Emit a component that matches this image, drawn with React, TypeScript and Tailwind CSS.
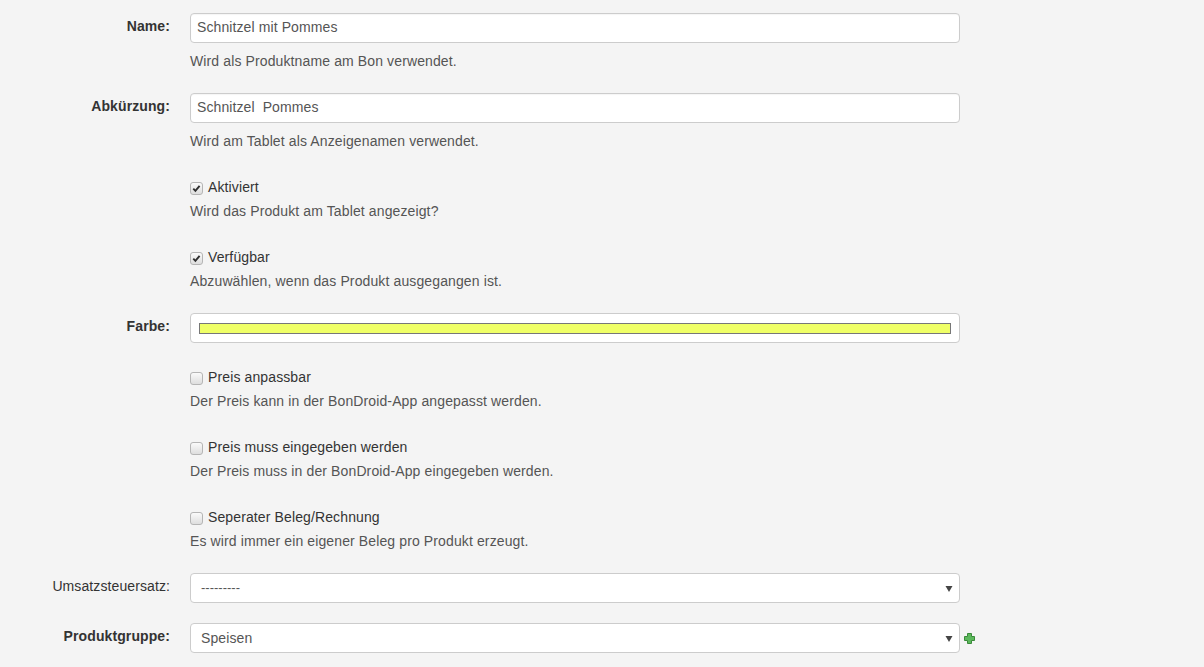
import React from "react";

const font = { fontFamily: '"Liberation Sans", Arial, sans-serif' };

function Label({ text, bold = true }: { text: string; bold?: boolean }) {
  return (
    <div className={`w-[170px] shrink-0 pt-[3px] text-right text-[14px] leading-5 tracking-[0.1px] text-[#333] ${bold ? "font-bold" : ""}`}>
      {text}
    </div>
  );
}

function Help({ children, className = "" }: { children: React.ReactNode; className?: string }) {
  return <div className={`text-[14px] leading-5 tracking-[0.12px] text-[#555] ${className}`}>{children}</div>;
}

function Box({ checked }: { checked: boolean }) {
  return (
    <span className="mr-[5px] mt-[5px] inline-flex h-[13px] w-[13px] shrink-0 items-center justify-center rounded-[3px] border border-[#b5b5b5] bg-gradient-to-b from-[#fafafa] to-[#dedede]">
      {checked && (
        <svg width="9" height="9" viewBox="0 0 9 9">
          <path d="M1.3 4.6 L3.4 6.8 L7.6 1.8" fill="none" stroke="#2f2f2f" strokeWidth="1.9" />
        </svg>
      )}
    </span>
  );
}

function CheckRow({ label, help, checked, className }: { label: string; help: string; checked: boolean; className: string }) {
  return (
    <div className={`flex ${className}`}>
      <div className="w-[170px] shrink-0" />
      <div className="ml-5">
        <div className="flex h-5 text-[14px] leading-5 tracking-[0.12px] text-[#333]">
          <Box checked={checked} />
          <span>{label}</span>
        </div>
        <Help className="mt-1">{help}</Help>
      </div>
    </div>
  );
}

function Arrow() {
  return (
    <svg width="8" height="8" viewBox="0 0 8 8" className="absolute right-[6px] top-[11px]">
      <path d="M0.5 1 H7.5 L4 7 Z" fill="#444" />
    </svg>
  );
}

export default function App() {
  return (
    <div style={font} className="min-h-[667px] w-full bg-[#f4f4f4] pt-[13px]">
      {/* Name */}
      <div className="flex">
        <Label text="Name:" />
        <div className="ml-5">
          <div className="flex h-[30px] w-[770px] items-center rounded-[4px] border border-[#ccc] bg-white pb-[2px] pl-[6px] text-[14px] tracking-[0.1px] text-[#555] shadow-[inset_0_1px_1px_rgba(0,0,0,0.04)]">
            Schnitzel mit Pommes
          </div>
          <Help className="mt-2">Wird als Produktname am Bon verwendet.</Help>
        </div>
      </div>

      {/* Abkürzung */}
      <div className="mt-[22px] flex">
        <Label text="Abkürzung:" />
        <div className="ml-5">
          <div className="flex h-[30px] w-[770px] items-center whitespace-pre rounded-[4px] border border-[#ccc] bg-white pb-[2px] pl-[6px] text-[14px] tracking-[0.1px] text-[#555] shadow-[inset_0_1px_1px_rgba(0,0,0,0.04)]">
            {"Schnitzel  Pommes"}
          </div>
          <Help className="mt-2">Wird am Tablet als Anzeigenamen verwendet.</Help>
        </div>
      </div>

      <CheckRow className="mt-[26px]" checked label="Aktiviert" help="Wird das Produkt am Tablet angezeigt?" />
      <CheckRow className="mt-[26px]" checked label="Verfügbar" help="Abzuwählen, wenn das Produkt ausgegangen ist." />

      {/* Farbe */}
      <div className="mt-[22px] flex">
        <Label text="Farbe:" />
        <div className="ml-5">
          <div className="flex h-[30px] w-[770px] items-center rounded-[4px] border border-[#ccc] bg-white px-[8px]">
            <div className="h-[11px] w-full border border-[#777] bg-[#efff66]" />
          </div>
        </div>
      </div>

      <CheckRow className="mt-[24px]" checked={false} label="Preis anpassbar" help="Der Preis kann in der BonDroid-App angepasst werden." />
      <CheckRow className="mt-[26px]" checked={false} label="Preis muss eingegeben werden" help="Der Preis muss in der BonDroid-App eingegeben werden." />
      <CheckRow className="mt-[26px]" checked={false} label="Seperater Beleg/Rechnung" help="Es wird immer ein eigener Beleg pro Produkt erzeugt." />

      {/* Umsatzsteuersatz */}
      <div className="mt-[22px] flex">
        <Label text="Umsatzsteuersatz:" bold={false} />
        <div className="ml-5">
          <div className="relative flex h-[30px] w-[770px] items-center rounded-[4px] border border-[#ccc] bg-white pl-[10px] text-[13px] text-[#555]">
            ---------
            <Arrow />
          </div>
        </div>
      </div>

      {/* Produktgruppe */}
      <div className="mt-5 flex">
        <Label text="Produktgruppe:" />
        <div className="ml-5 flex items-center">
          <div className="relative flex h-[30px] w-[770px] items-center rounded-[4px] border border-[#ccc] bg-white pl-[10px] text-[14px] tracking-[0.1px] text-[#555]">
            Speisen
            <Arrow />
          </div>
          <svg width="11" height="11" viewBox="0 0 11 11" className="ml-[4px]">
            <path d="M3.5 0.5 H7.5 V3.5 H10.5 V7.5 H7.5 V10.5 H3.5 V7.5 H0.5 V3.5 H3.5 Z" fill="#5cb85c" stroke="#3a8a3a" strokeWidth="1" />
          </svg>
        </div>
      </div>
    </div>
  );
}
